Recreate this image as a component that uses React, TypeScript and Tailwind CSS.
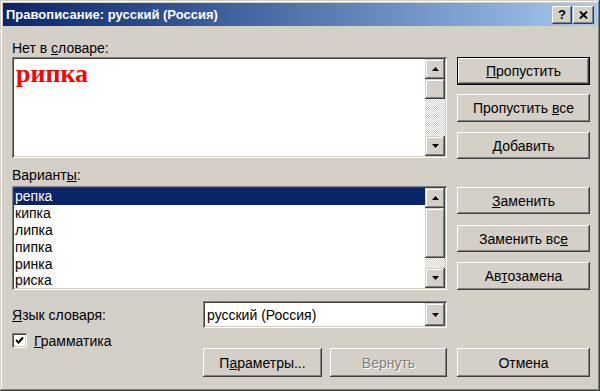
const raised =
  'shadow-[inset_-1px_-1px_0_#404040,inset_1px_1px_0_#ffffff,inset_-2px_-2px_0_#808080,inset_2px_2px_0_#d4d0c8]';
const raisedSb =
  'shadow-[inset_-1px_-1px_0_#404040,inset_1px_1px_0_#d4d0c8,inset_-2px_-2px_0_#808080,inset_2px_2px_0_#ffffff]';
const sunken =
  'shadow-[inset_1px_1px_0_#808080,inset_-1px_-1px_0_#ffffff,inset_2px_2px_0_#404040,inset_-2px_-2px_0_#d4d0c8]';
const track =
  'bg-[image:repeating-conic-gradient(#d4d0c8_0%_25%,#ffffff_0%_50%)] bg-[length:2px_2px]';

function Arrow({ up }: { up?: boolean }) {
  return (
    <svg width="7" height="4" viewBox="0 0 7 4">
      <polygon points={up ? '3.5,0 7,4 0,4' : '0,0 7,0 3.5,4'} fill="#000" />
    </svg>
  );
}

function ArrowBtn({ up, className = 'h-[20px]' }: { up?: boolean; className?: string }) {
  return (
    <div className={`flex w-[20px] shrink-0 items-center justify-center bg-[#d4d0c8] ${raisedSb} ${className}`}>
      <Arrow up={up} />
    </div>
  );
}

function Btn({
  children,
  w = 'w-[133px]',
  h = 'h-[28px]',
  def,
  disabled,
}: {
  children: React.ReactNode;
  w?: string;
  h?: string;
  def?: boolean;
  disabled?: boolean;
}) {
  return (
    <div className={`${w} ${h} shrink-0 ${def ? 'border border-black' : ''}`}>
      <div
        className={`flex h-full w-full items-center justify-center bg-[#d4d0c8] ${raised} ${
          disabled ? 'text-[#808080] [text-shadow:1px_1px_0_#ffffff]' : 'text-black'
        }`}
      >
        <span>{children}</span>
      </div>
    </div>
  );
}

const words = ['репка', 'кипка', 'липка', 'пипка', 'ринка', 'риска'];

export default function App() {
  return (
    <div className="h-[391px] w-[600px] bg-[#d4d0c8] p-[3px] font-['Liberation_Sans',Arial,sans-serif] text-[14px] leading-[16px] text-black shadow-[inset_-1px_-1px_0_#404040,inset_1px_1px_0_#d4d0c8,inset_-2px_-2px_0_#808080,inset_2px_2px_0_#ffffff]">
      {/* title bar */}
      <div className="flex h-[23px] items-center bg-linear-to-r from-[#0a246a] to-[#a6caf0] px-[3px]">
        <div className="flex-1 text-[13px] font-bold text-white">Правописание: русский (Россия)</div>
        <div className={`flex h-[18px] w-[20px] items-center justify-center bg-[#d4d0c8] ${raised} text-[13px] font-bold`}>
          ?
        </div>
        <div className={`ml-[1px] flex h-[18px] w-[21px] items-center justify-center bg-[#d4d0c8] ${raised}`}>
          <svg width="9" height="8" viewBox="0 0 9 8">
            <path d="M1 0.5 L8 7.5 M8 0.5 L1 7.5" stroke="#000" strokeWidth="1.8" />
          </svg>
        </div>
      </div>

      <div className="pl-[9px] pr-[7px]">
        <div className="flex gap-[10px]">
          {/* left column */}
          <div className="w-[435px]">
            <div className="flex h-[31px] items-end pb-[1px]">
              <span>
                Нет в <u>с</u>ловаре:
              </span>
            </div>
            <div className={`flex h-[101px] bg-white p-[2px] ${sunken}`}>
              <div className="flex-1 pl-[2px] pt-[1px] font-['Liberation_Serif','Times_New_Roman',serif] text-[26px] leading-[28px] font-bold text-[#ff0000]">
                рипка
              </div>
              <div className="flex w-[20px] flex-col">
                <ArrowBtn up />
                <div className={`h-[20px] bg-[#d4d0c8] ${raisedSb}`} />
                <div className={`flex-1 ${track}`} />
                <ArrowBtn />
              </div>
            </div>
            <div className="flex h-[28px] items-end pb-[3px]">
              <span>
                Вариант<u>ы</u>:
              </span>
            </div>
            <div className={`flex h-[104px] bg-white p-[2px] ${sunken}`}>
              <div className="flex-1 overflow-hidden">
                {words.map((w, i) => (
                  <div
                    key={w}
                    className={`flex h-[16.8px] items-center pl-[1px] ${i === 0 ? 'bg-[#0a246a] text-white' : ''}`}
                  >
                    {w}
                  </div>
                ))}
              </div>
              <div className="flex w-[20px] flex-col">
                <ArrowBtn up />
                <div className={`h-[50px] bg-[#d4d0c8] ${raisedSb}`} />
                <div className={`flex-1 ${track}`} />
                <ArrowBtn />
              </div>
            </div>
          </div>

          {/* right column */}
          <div className="flex w-[133px] flex-col pt-[31px]">
            <Btn def>
              <u>П</u>ропустить
            </Btn>
            <div className="h-[9px]" />
            <Btn>
              Пропустить <u>в</u>се
            </Btn>
            <div className="h-[10px]" />
            <Btn h="h-[27px]">
              <u>Д</u>обавить
            </Btn>
            <div className="h-[28px]" />
            <Btn h="h-[27px]">
              <u>З</u>аменить
            </Btn>
            <div className="h-[11px]" />
            <Btn h="h-[27px]">
              Заменить вс<u>е</u>
            </Btn>
            <div className="h-[10px]" />
            <Btn>
              Ав<u>т</u>озамена
            </Btn>
          </div>
        </div>

        {/* bottom section */}
        <div className="mt-[11px] flex h-[27px] items-center">
          <div className="w-[191px]">
            <u>Я</u>зык словаря:
          </div>
          <div className={`flex h-[27px] w-[244px] bg-white p-[2px] ${sunken}`}>
            <div className="flex flex-1 items-center pl-[2px]">русский (Россия)</div>
            <ArrowBtn className="h-full" />
          </div>
        </div>
        <div className="mt-[5px] flex h-[15px] items-center">
          <div className={`flex h-[15px] w-[15px] items-center justify-center bg-white ${sunken}`}>
            <svg width="9" height="9" viewBox="0 0 9 9">
              <path d="M1 4 L3.5 6.5 L8 1.5" stroke="#000" strokeWidth="2" fill="none" />
            </svg>
          </div>
          <div className="ml-[7px]">
            <u>Г</u>рамматика
          </div>
        </div>
        <div className="flex h-[29px]">
          <div className="w-[191px]" />
          <Btn w="w-[119px]" h="h-[29px]">
            П<u>а</u>раметры...
          </Btn>
          <div className="w-[8px]" />
          <Btn w="w-[117px]" h="h-[29px]" disabled>
            Вернуть
          </Btn>
          <div className="w-[10px]" />
          <Btn w="w-[133px]" h="h-[29px]">
            Отмена
          </Btn>
        </div>
      </div>
    </div>
  );
}
